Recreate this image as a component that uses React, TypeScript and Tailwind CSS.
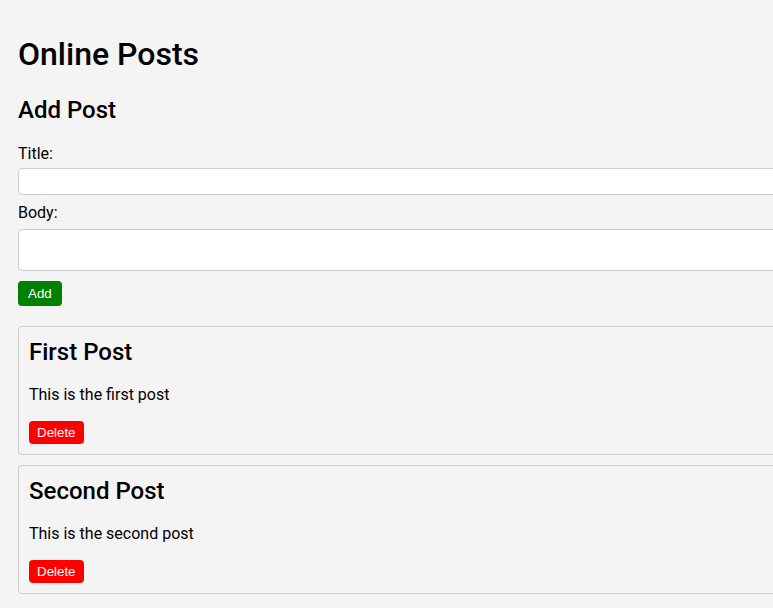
import React from "react";

const posts = [
  { title: "First Post", body: "This is the first post" },
  { title: "Second Post", body: "This is the second post" },
];

export default function App() {
  return (
    <div className="h-screen w-full overflow-hidden bg-[#f4f4f4] text-black font-['Roboto',sans-serif]">
      <div className="w-[1000px] pl-[18px] pt-[36px]">
        <h1 className="text-[32px] leading-[37.5px] font-medium">Online Posts</h1>
        <h2 className="mt-[22px] text-[24px] leading-[28px] font-medium">Add Post</h2>
        <form className="mt-[21px] flex flex-col" onSubmit={(e) => e.preventDefault()}>
          <label className="block text-[16px] leading-[18.75px] mb-[5px]">Title:</label>
          <input
            type="text"
            className="block w-full h-[27px] bg-white border border-[#ccc] rounded-[4px] px-[5px] outline-none"
          />
          <label className="block mt-[9px] text-[16px] leading-[18.75px] mb-[6px]">Body:</label>
          <textarea className="block w-full h-[42px] bg-white border border-[#ccc] rounded-[4px] px-[5px] outline-none resize-none" />
          <div className="mt-[10px]">
            <button
              type="submit"
              className="h-[25px] px-[10px] bg-[#008000] text-white rounded-[4px] text-[13.333px] leading-[15px] font-['Liberation_Sans',Arial,sans-serif]"
            >
              Add
            </button>
          </div>
        </form>
        <div className="mt-[20px] flex flex-col gap-[10px]">
          {posts.map((p) => (
            <div
              key={p.title}
              className="w-full border border-[#ccc] rounded-[4px] pt-[11px] pb-[10px] px-[10px]"
            >
              <h2 className="text-[24px] leading-[28px] font-medium">{p.title}</h2>
              <p className="mt-[20px] text-[16px] leading-[18.75px]">{p.body}</p>
              <button className="mt-[16px] h-[23px] px-[8px] bg-[#ff0000] text-white rounded-[4px] text-[13.333px] leading-[15px] font-['Liberation_Sans',Arial,sans-serif]">
                Delete
              </button>
            </div>
          ))}
        </div>
      </div>
    </div>
  );
}
